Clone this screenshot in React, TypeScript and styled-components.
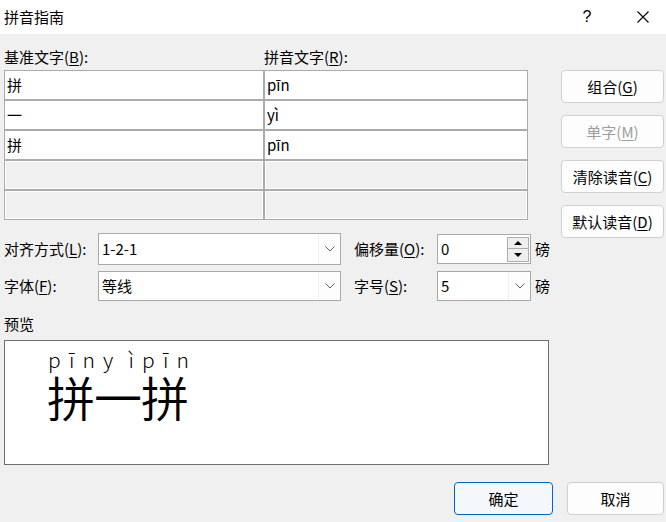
import styled, { createGlobalStyle } from "styled-components";

const GlobalStyle = createGlobalStyle`
  html, body {
    margin: 0;
    padding: 0;
  }
  body {
    background: #f0f0f0;
    font-family: "Noto Sans CJK SC", "Noto Sans", sans-serif;
    font-size: 15px;
    color: #000;
  }
  u {
    text-decoration-thickness: 1px;
    text-underline-offset: 2px;
  }
`;

const Dialog = styled.div`
  width: 666px;
  height: 522px;
  display: flex;
  flex-direction: column;
  overflow: hidden;
  background: #f0f0f0;
`;

const TitleBar = styled.div`
  height: 34px;
  flex: none;
  background: #fff;
  display: flex;
  align-items: center;
  padding-left: 4px;
`;

const Title = styled.div`
  flex: 1;
  font-size: 15px;
  line-height: 20px;
`;

const TitleButton = styled.div<{ $gap?: number }>`
  width: 44px;
  height: 34px;
  display: flex;
  align-items: center;
  justify-content: center;
  margin-right: ${(p) => p.$gap ?? 0}px;
  font-family: "Liberation Sans", sans-serif;
  font-size: 16px;
`;

const Body = styled.div`
  display: flex;
  padding-left: 4px;
`;

const LeftPane = styled.div`
  width: 545px;
  display: flex;
  flex-direction: column;
`;

const HeaderRow = styled.div`
  height: 36px;
  display: grid;
  grid-template-columns: 260px 264px;
  align-items: end;
  padding-bottom: 3px;
  box-sizing: border-box;
  line-height: 20px;
`;

const Table = styled.div`
  display: grid;
  grid-template-columns: 260px 264px;
  grid-auto-rows: 30px;
`;

const Cell = styled.div<{ $empty?: boolean }>`
  box-sizing: border-box;
  border: 1px solid #ababab;
  background: ${(p) => (p.$empty ? "#f0f0f0" : "#fff")};
  box-shadow: ${(p) => (p.$empty ? "inset 0 0 0 1px #fff" : "none")};
  display: flex;
  align-items: center;
  padding: 0 2px;
  line-height: 20px;
`;

const OptionRow = styled.div<{ $h: number; $mt: number }>`
  display: flex;
  align-items: center;
  height: ${(p) => p.$h}px;
  margin-top: ${(p) => p.$mt}px;
`;

const FieldLabel = styled.div<{ $w: number; $ml?: number }>`
  width: ${(p) => p.$w}px;
  margin-left: ${(p) => p.$ml ?? 0}px;
  flex: none;
  line-height: 20px;
  white-space: nowrap;
`;

const Combo = styled.div<{ $w: number; $h: number }>`
  width: ${(p) => p.$w}px;
  height: ${(p) => p.$h}px;
  box-sizing: border-box;
  border: 1px solid #a9a9a9;
  background: #fff;
  display: flex;
  align-items: stretch;
  flex: none;
`;

const ComboText = styled.div`
  flex: 1;
  display: flex;
  align-items: center;
  padding-left: 3px;
  line-height: 20px;
`;

const DropButton = styled.div`
  width: 21px;
  display: flex;
  align-items: center;
  justify-content: center;
  border-left: 1px solid #f0f0f0;
  background: #fdfdfd;
`;

const SpinButtons = styled.div`
  width: 22px;
  display: flex;
  flex-direction: column;
  margin: 2px 1px 1px 0;
`;

const SpinButton = styled.div<{ $h: number }>`
  height: ${(p) => p.$h}px;
  box-sizing: border-box;
  border: 1px solid #adadad;
  background: #efefef;
  display: flex;
  align-items: center;
  justify-content: center;
  & + & {
    border-top: none;
  }
`;

const Unit = styled.div`
  margin-left: 4px;
  line-height: 20px;
`;

const SectionLabel = styled.div`
  margin-top: 13px;
  line-height: 20px;
`;

const PreviewBox = styled.div`
  margin-top: 6px;
  height: 125px;
  box-sizing: border-box;
  border: 1px solid #6e6e6e;
  background: #fff;
  padding: 7px 0 0 43px;
  display: flex;
  align-items: flex-start;
`;

const RubyChar = styled.div`
  width: 47px;
  display: flex;
  flex-direction: column;
  font-weight: 300;
`;

const Pinyin = styled.div<{ $pad: number }>`
  display: flex;
  justify-content: space-between;
  padding: 0 ${(p) => p.$pad}px;
  font-size: 21px;
  line-height: 22px;
`;

const Hanzi = styled.div`
  margin-top: 3px;
  font-size: 48px;
  line-height: 47px;
  margin-left: -1px;
  font-weight: 350;
`;

const ButtonColumn = styled.div`
  margin-left: 12px;
  padding-top: 36px;
  display: flex;
  flex-direction: column;
  gap: 12px;
`;

const Button = styled.div<{ $w?: number; $disabled?: boolean; $primary?: boolean }>`
  width: ${(p) => p.$w ?? 103}px;
  height: 33px;
  box-sizing: border-box;
  border: 1px solid ${(p) => (p.$primary ? "#0067c0" : "#d0d0d0")};
  border-radius: 4px;
  background: ${(p) => (p.$primary ? "#f4f8fd" : "#fdfdfd")};
  color: ${(p) => (p.$disabled ? "#9d9d9d" : "#000")};
  display: flex;
  align-items: center;
  justify-content: center;
  line-height: 20px;
`;

const Footer = styled.div`
  margin-top: 17px;
  display: flex;
  justify-content: flex-end;
  gap: 14px;
  padding-right: 2px;
`;

const Chevron = () => (
  <svg width="10" height="6" viewBox="0 0 10 6">
    <path d="M0.5 0.5 L5 5 L9.5 0.5" fill="none" stroke="#606060" strokeWidth="1" />
  </svg>
);

const Arrow = ({ up }: { up?: boolean }) => (
  <svg width="8" height="4" viewBox="0 0 8 4">
    <path d={up ? "M0 4 L4 0 L8 4 Z" : "M0 0 L8 0 L4 4 Z"} fill="#000" />
  </svg>
);

const rows = [
  ["拼", "pīn"],
  ["一", "yì"],
  ["拼", "pīn"],
];

const ruby = [
  { py: ["p", "ī", "n"], hz: "拼", pad: 0 },
  { py: ["y", "ì"], hz: "一", pad: 8 },
  { py: ["p", "ī", "n"], hz: "拼", pad: 0 },
];

export default function App() {
  return (
    <>
      <GlobalStyle />
      <Dialog>
        <TitleBar>
          <Title>拼音指南</Title>
          <TitleButton $gap={12}>?</TitleButton>
          <TitleButton $gap={1}>
            <svg width="12" height="12" viewBox="0 0 12 12">
              <path d="M0.5 0.5 L11.5 11.5 M11.5 0.5 L0.5 11.5" stroke="#000" strokeWidth="1.1" />
            </svg>
          </TitleButton>
        </TitleBar>
        <Body>
          <LeftPane>
            <HeaderRow>
              <div>基准文字(<u>B</u>):</div>
              <div>拼音文字(<u>R</u>):</div>
            </HeaderRow>
            <Table>
              {rows.flatMap(([base, py], i) => [
                <Cell key={`b${i}`}>{base}</Cell>,
                <Cell key={`p${i}`}>{py}</Cell>,
              ])}
              <Cell $empty />
              <Cell $empty />
              <Cell $empty />
              <Cell $empty />
            </Table>
            <OptionRow $h={32} $mt={13}>
              <FieldLabel $w={94}>对齐方式(<u>L</u>):</FieldLabel>
              <Combo $w={243} $h={32}>
                <ComboText>1-2-1</ComboText>
                <DropButton>
                  <Chevron />
                </DropButton>
              </Combo>
              <FieldLabel $w={83} $ml={13}>偏移量(<u>O</u>):</FieldLabel>
              <Combo $w={94} $h={30}>
                <ComboText>0</ComboText>
                <SpinButtons>
                  <SpinButton $h={12}>
                    <Arrow up />
                  </SpinButton>
                  <SpinButton $h={13}>
                    <Arrow />
                  </SpinButton>
                </SpinButtons>
              </Combo>
              <Unit>磅</Unit>
            </OptionRow>
            <OptionRow $h={30} $mt={6}>
              <FieldLabel $w={94}>字体(<u>F</u>):</FieldLabel>
              <Combo $w={243} $h={30}>
                <ComboText>等线</ComboText>
                <DropButton>
                  <Chevron />
                </DropButton>
              </Combo>
              <FieldLabel $w={83} $ml={13}>字号(<u>S</u>):</FieldLabel>
              <Combo $w={94} $h={30}>
                <ComboText>5</ComboText>
                <DropButton>
                  <Chevron />
                </DropButton>
              </Combo>
              <Unit>磅</Unit>
            </OptionRow>
            <SectionLabel>预览</SectionLabel>
            <PreviewBox>
              {ruby.map((r, i) => (
                <RubyChar key={i}>
                  <Pinyin $pad={r.pad}>
                    {r.py.map((c, j) => (
                      <span key={j}>{c}</span>
                    ))}
                  </Pinyin>
                  <Hanzi>{r.hz}</Hanzi>
                </RubyChar>
              ))}
            </PreviewBox>
          </LeftPane>
          <ButtonColumn>
            <Button>组合(<u>G</u>)</Button>
            <Button $disabled>单字(<u>M</u>)</Button>
            <Button>清除读音(<u>C</u>)</Button>
            <Button>默认读音(<u>D</u>)</Button>
          </ButtonColumn>
        </Body>
        <Footer>
          <Button $w={99} $primary>确定</Button>
          <Button $w={97}>取消</Button>
        </Footer>
      </Dialog>
    </>
  );
}
